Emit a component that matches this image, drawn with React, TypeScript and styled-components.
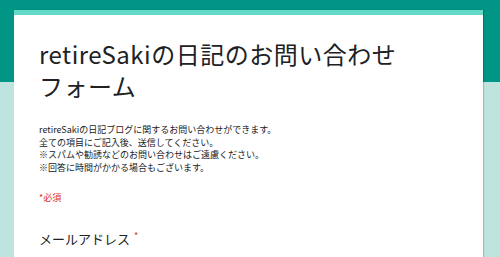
import React from 'react';
import styled, { createGlobalStyle } from 'styled-components';

const GlobalStyle = createGlobalStyle`
  html, body {
    margin: 0;
    padding: 0;
  }
  body {
    font-family: "Noto Sans CJK JP", "Noto Sans", sans-serif;
    color: #202124;
  }
`;

const Page = styled.div`
  height: 257px;
  overflow: hidden;
  padding-top: 10px;
  box-sizing: border-box;
  background: linear-gradient(#009585 0, #009585 82px, #bfe4df 82px);
`;

const Card = styled.div`
  width: 469px;
  margin-left: 14px;
  background: #fff;
  border-top: 5px solid #64d9c8;
  box-shadow: 1px 0 1px rgba(0, 0, 0, 0.18);
  padding: 23px 25px 20px;
  box-sizing: border-box;
  min-height: 260px;
`;

const Title = styled.h1`
  margin: 0;
  font-size: 24px;
  font-weight: 400;
  line-height: 32px;
  letter-spacing: 0.5px;
  color: #202124;
`;

const Description = styled.div`
  margin-top: 22px;
  font-size: 9px;
  line-height: 12.7px;
  color: #202124;
`;

const Required = styled.div`
  margin-top: 17px;
  font-size: 9px;
  line-height: 12px;
  color: #d93025;
`;

const QuestionLabel = styled.div`
  margin-top: 26px;
  font-size: 13px;
  line-height: 18px;
  color: #202124;
  display: flex;
  align-items: flex-start;
  gap: 4px;
`;

const Star = styled.span`
  color: #d93025;
  font-size: 9px;
  line-height: 12px;
`;

const descriptionLines = [
  'retireSakiの日記ブログに関するお問い合わせができます。',
  '全ての項目にご記入後、送信してください。',
  '※スパムや勧誘などのお問い合わせはご遠慮ください。',
  '※回答に時間がかかる場合もございます。',
];

const App = () => (
  <>
    <GlobalStyle />
    <Page>
      <Card>
        <Title>
          retireSakiの日記のお問い合わせ
          <br />
          フォーム
        </Title>
        <Description>
          {descriptionLines.map((line) => (
            <div key={line}>{line}</div>
          ))}
        </Description>
        <Required>*必須</Required>
        <QuestionLabel>
          メールアドレス<Star>*</Star>
        </QuestionLabel>
      </Card>
    </Page>
  </>
);

export default App;
